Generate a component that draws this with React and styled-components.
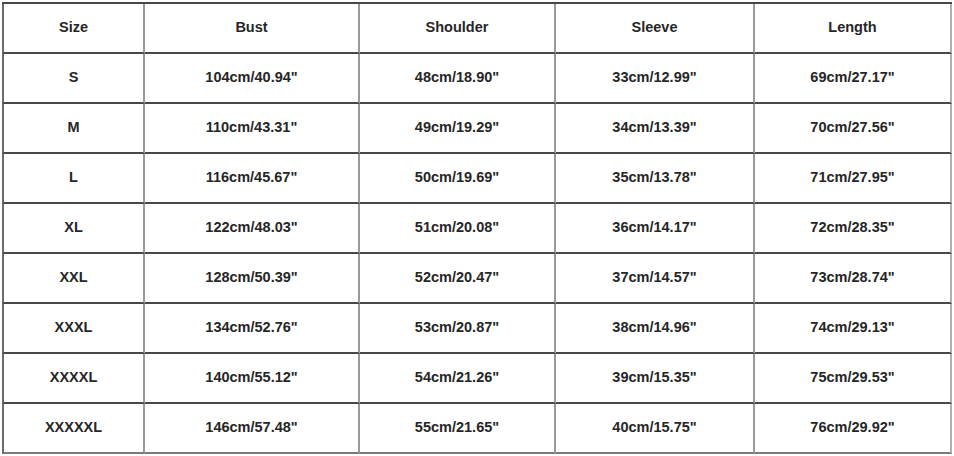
import styled, { createGlobalStyle } from 'styled-components';

const GlobalStyle = createGlobalStyle`
    html, body {
        margin: 0;
        padding: 0;
        background: #ffffff;
    }
    body {
        font-family: "Liberation Sans", Arial, sans-serif;
    }
`

const columns = [
    { title: 'Size', width: 143 },
    { title: 'Bust', width: 215 },
    { title: 'Shoulder', width: 196 },
    { title: 'Sleeve', width: 199 },
    { title: 'Length', width: 197 },
];

const rows = [
    ['S', '104cm/40.94"', '48cm/18.90"', '33cm/12.99"', '69cm/27.17"'],
    ['M', '110cm/43.31"', '49cm/19.29"', '34cm/13.39"', '70cm/27.56"'],
    ['L', '116cm/45.67"', '50cm/19.69"', '35cm/13.78"', '71cm/27.95"'],
    ['XL', '122cm/48.03"', '51cm/20.08"', '36cm/14.17"', '72cm/28.35"'],
    ['XXL', '128cm/50.39"', '52cm/20.47"', '37cm/14.57"', '73cm/28.74"'],
    ['XXXL', '134cm/52.76"', '53cm/20.87"', '38cm/14.96"', '74cm/29.13"'],
    ['XXXXL', '140cm/55.12"', '54cm/21.26"', '39cm/15.35"', '75cm/29.53"'],
    ['XXXXXL', '146cm/57.48"', '55cm/21.65"', '40cm/15.75"', '76cm/29.92"'],
];

export default function App() {
    return (
        <>
            <GlobalStyle />
            <Page>
                <SizeTable>
                    <colgroup>
                        {columns.map((col) => (
                            <col key={col.title} style={{ width: col.width }} />
                        ))}
                    </colgroup>
                    <thead>
                        <tr>
                            {columns.map((col, i) => (
                                <Cell as="th" key={col.title} $first={i === 0} $last={i === columns.length - 1}>
                                    {col.title}
                                </Cell>
                            ))}
                        </tr>
                    </thead>
                    <tbody>
                        {rows.map((row, r) => (
                            <tr key={row[0]}>
                                {row.map((value, i) => (
                                    <Cell
                                        key={i}
                                        $first={i === 0}
                                        $last={i === row.length - 1}
                                        $bottom={r === rows.length - 1}
                                    >
                                        {value}
                                    </Cell>
                                ))}
                            </tr>
                        ))}
                    </tbody>
                </SizeTable>
            </Page>
        </>
    );
}

const Page = styled.div`
    padding: 2px;
    width: 950px;
`
const SizeTable = styled.table`
    width: 950px;
    table-layout: fixed;
    border-collapse: separate;
    border-spacing: 0;
    border-top: 2px solid #484848;
`
const Cell = styled.td`
    height: 46px;
    padding: 0 0 2px;
    box-sizing: content-box;
    text-align: center;
    vertical-align: middle;
    font-family: "Liberation Sans", Arial, sans-serif;
    font-size: 14.5px;
    font-weight: 700;
    color: #262626;
    white-space: nowrap;
    border-bottom: 2px solid ${(p) => (p.$bottom ? '#7a7a7a' : '#484848')};
    border-right: 2px solid ${(p) => (p.$last ? '#b0b0b0' : '#9a9a9a')};
    border-left: ${(p) => (p.$first ? '2px solid #6a6a6a' : 'none')};
`
